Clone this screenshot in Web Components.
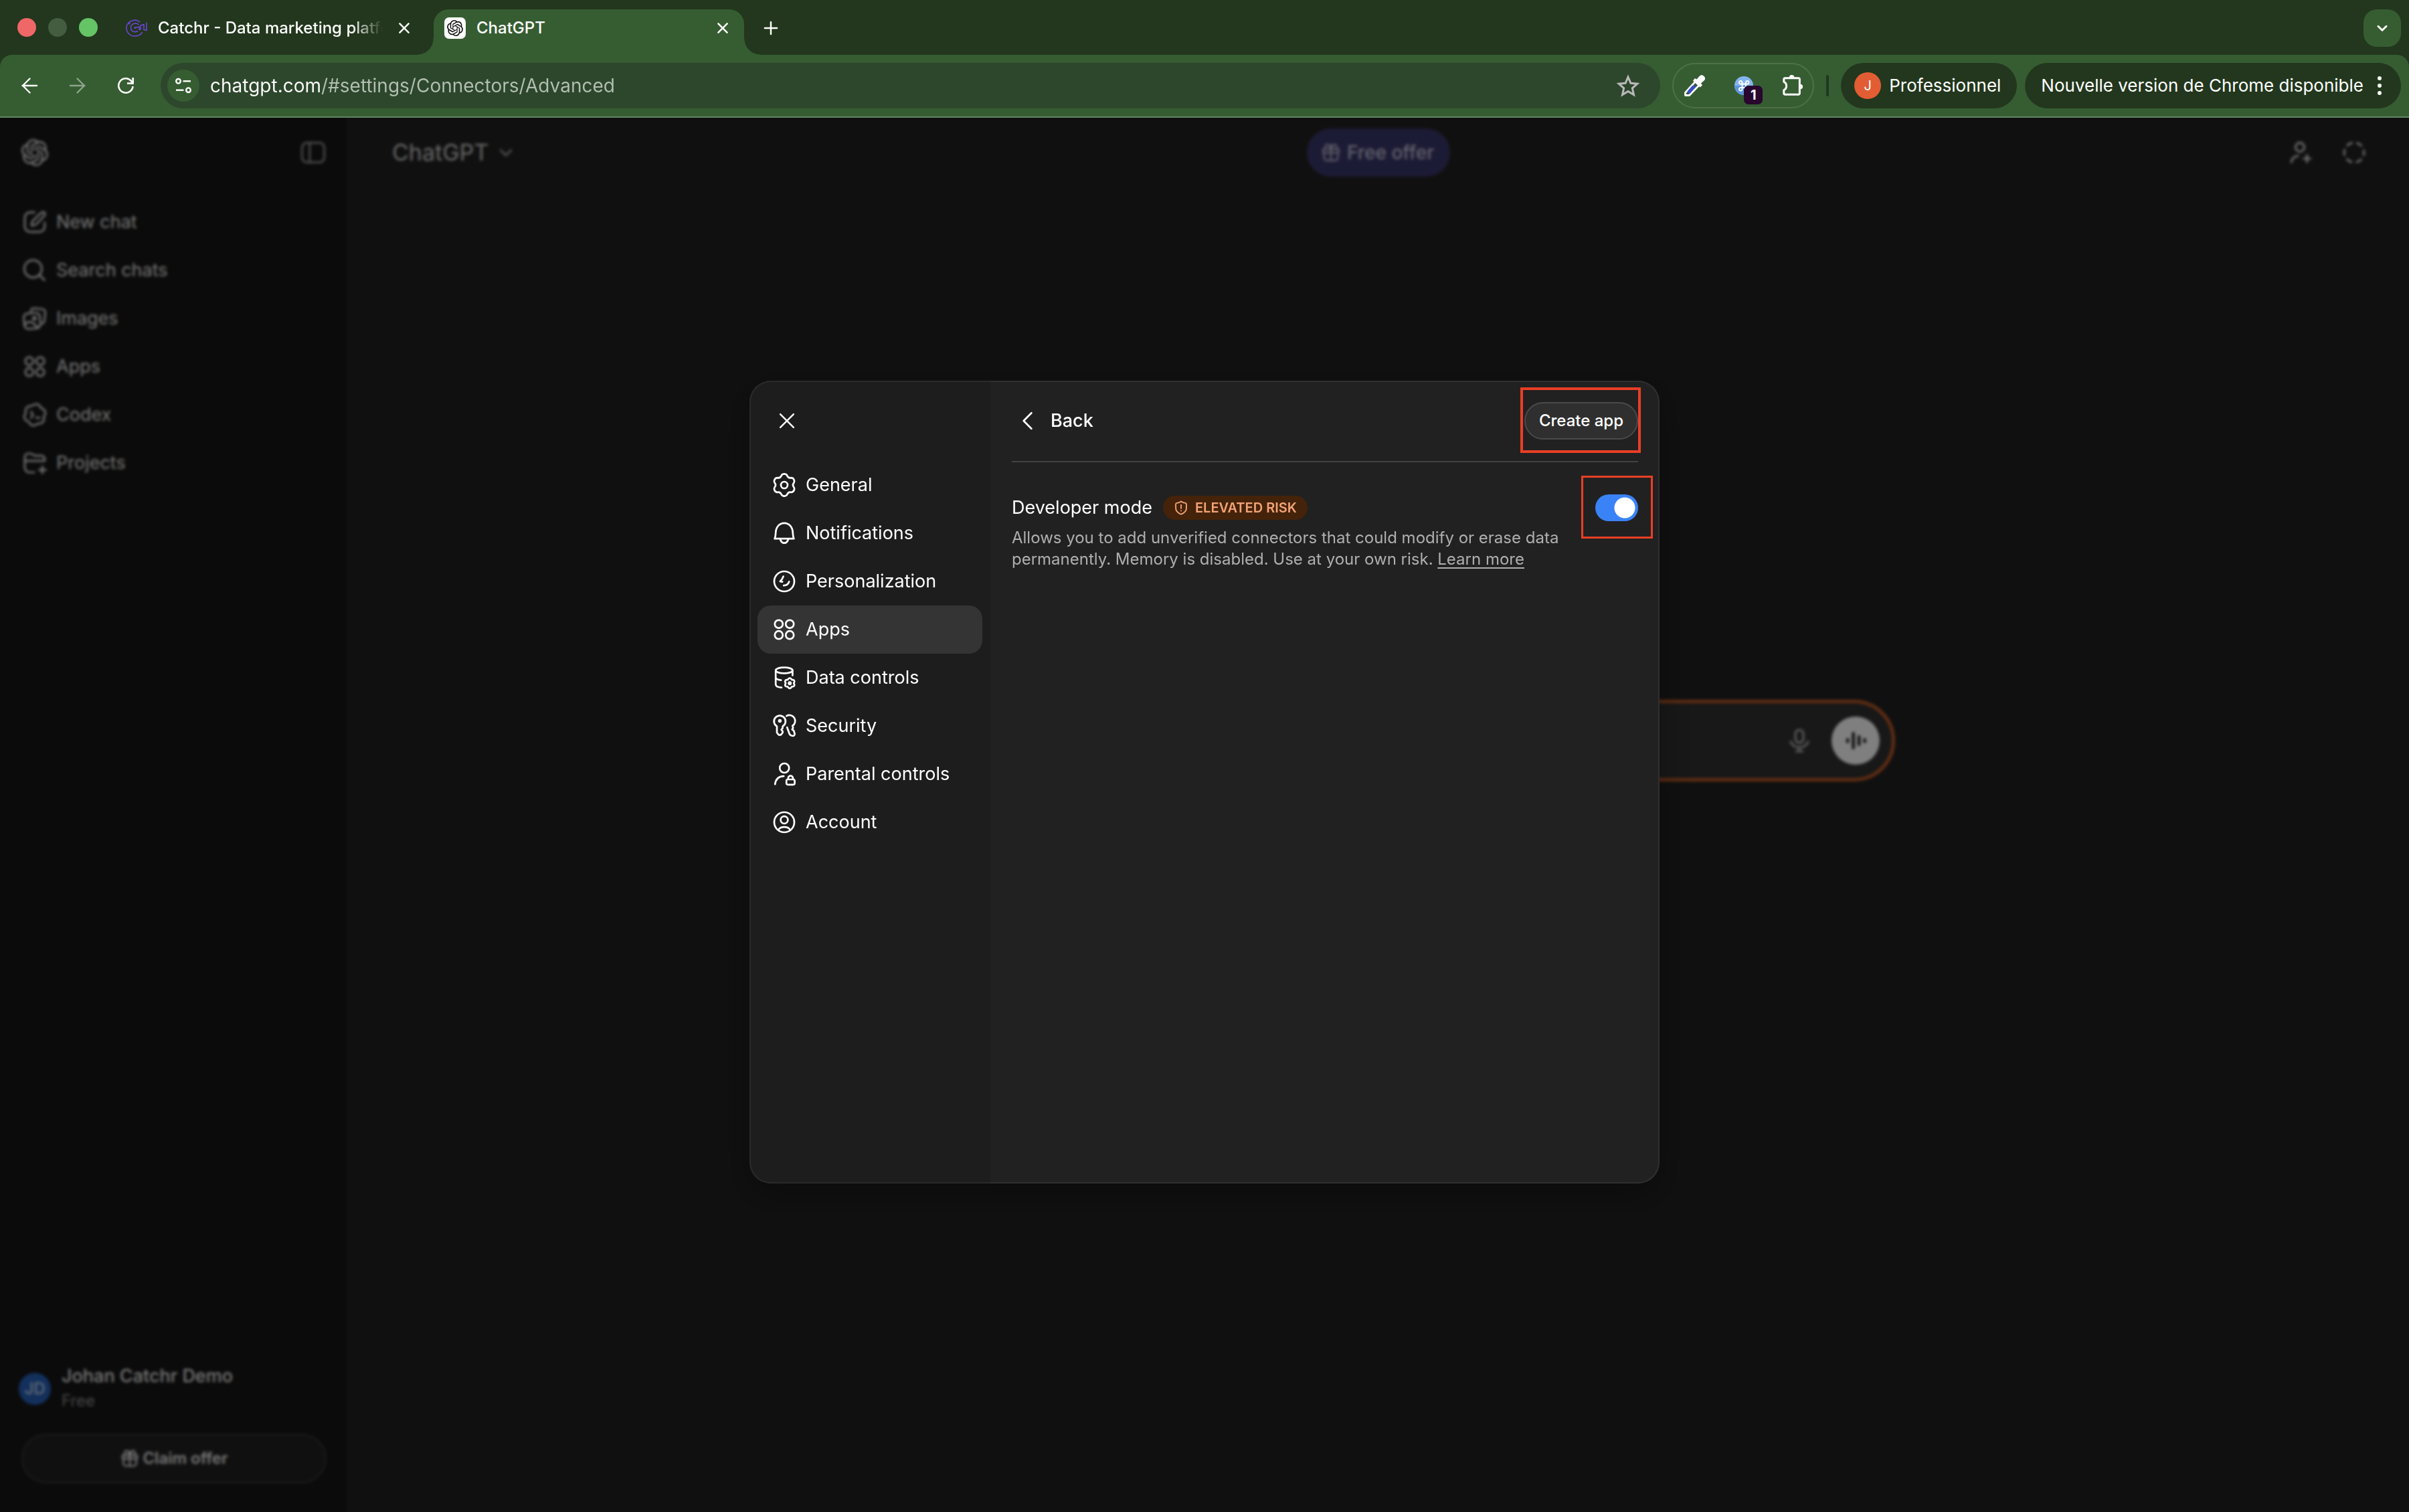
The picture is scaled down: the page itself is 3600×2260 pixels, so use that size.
<!DOCTYPE html>
<html lang="en">
<head>
<meta charset="utf-8">
<title>ChatGPT</title>
<style>
    html, body {
        height: 100%;
        margin: 0;
    }
    body {
        background: #101010;
        color: #fff;
        font-family: Inter, "Liberation Sans", sans-serif;
        font-size: 27px;
        line-height: 40px;
    }
</style>
</head>
<body>
<browser-window>
    <tab-strip slot="tabs">
        <browser-tab icon="catchr">Catchr - Data marketing platfo</browser-tab>
        <browser-tab icon="chatgpt" active>ChatGPT</browser-tab>
    </tab-strip>
    <tool-bar slot="toolbar" url="chatgpt.com/#settings/Connectors/Advanced"></tool-bar>
    <chat-app>
        <side-bar slot="sidebar">
            <side-item icon="edit">New chat</side-item>
            <side-item icon="search">Search chats</side-item>
            <side-item icon="images">Images</side-item>
            <side-item icon="apps">Apps</side-item>
            <side-item icon="codex">Codex</side-item>
            <side-item icon="folder">Projects</side-item>
        </side-bar>
        <chat-header></chat-header>
        <chat-composer></chat-composer>
        <settings-dialog slot="dialog">
            <settings-item slot="nav" icon="gear">General</settings-item>
            <settings-item slot="nav" icon="bell">Notifications</settings-item>
            <settings-item slot="nav" icon="mood">Personalization</settings-item>
            <settings-item slot="nav" icon="apps" selected>Apps</settings-item>
            <settings-item slot="nav" icon="data">Data controls</settings-item>
            <settings-item slot="nav" icon="keys">Security</settings-item>
            <settings-item slot="nav" icon="parent">Parental controls</settings-item>
            <settings-item slot="nav" icon="account">Account</settings-item>
            <setting-row
                label="Developer mode"
                badge="ELEVATED RISK"
                description="Allows you to add unverified connectors that could modify or erase data permanently. Memory is disabled. Use at your own risk."
            ></setting-row>
        </settings-dialog>
    </chat-app>
</browser-window>

<script>
// closed outline with six soft lobes, used by the gears and the Codex mark
function lobes(cx, cy, outer, inner, turn) {
    const at = (deg, r) => {
        const a = (deg + turn) * Math.PI / 180;
        return (cx + r * Math.cos(a)).toFixed(2) + " " + (cy + r * Math.sin(a)).toFixed(2);
    };
    const mid = (outer + inner) / 2;
    let d = "M" + at(-14, mid);
    for (let n = 0; n < 360; n += 60) {
        d += `Q${at(n, inner - (mid - inner))} ${at(n + 14, mid)}`;
        d += `C${at(n + 22, outer * 1.04)} ${at(n + 38, outer * 1.04)} ${at(n + 46, mid)}`;
    }
    return d + "Z";
}

const KNOT = "M22.2819 9.8211a5.9847 5.9847 0 0 0-.5157-4.9108 6.0462 6.0462 0 0 0-6.5098-2.9A6.0651 6.0651 0 0 0 4.9807 4.1818a5.9847 5.9847 0 0 0-3.9977 2.9 6.0462 6.0462 0 0 0 .7427 7.0966 5.98 5.98 0 0 0 .511 4.9107 6.051 6.051 0 0 0 6.5146 2.9001A5.9847 5.9847 0 0 0 13.2599 24a6.0557 6.0557 0 0 0 5.7718-4.2058 5.9894 5.9894 0 0 0 3.9977-2.9001 6.0557 6.0557 0 0 0-.7475-7.0729zm-9.022 12.6081a4.4755 4.4755 0 0 1-2.8764-1.0408l.1419-.0804 4.7783-2.7582a.7948.7948 0 0 0 .3927-.6813v-6.7369l2.02 1.1686a.071.071 0 0 1 .038.052v5.5826a4.504 4.504 0 0 1-4.4945 4.4944zm-9.6607-4.1254a4.4708 4.4708 0 0 1-.5346-3.0137l.142.0852 4.783 2.7582a.7712.7712 0 0 0 .7806 0l5.8428-3.3685v2.3324a.0804.0804 0 0 1-.0332.0615L9.74 19.9502a4.4992 4.4992 0 0 1-6.1408-1.6464zM2.3408 7.8956a4.485 4.485 0 0 1 2.3655-1.9728V11.6a.7664.7664 0 0 0 .3879.6765l5.8144 3.3543-2.0201 1.1685a.0757.0757 0 0 1-.071 0l-4.8303-2.7865A4.504 4.504 0 0 1 2.3408 7.872zm16.5963 3.8558L13.1038 8.364 15.1192 7.2a.0757.0757 0 0 1 .071 0l4.8303 2.7913a4.4944 4.4944 0 0 1-.6765 8.1042v-5.6772a.79.79 0 0 0-.407-.667zm2.0107-3.0231l-.142-.0852-4.7735-2.7818a.7759.7759 0 0 0-.7854 0L9.409 9.2297V6.8974a.0662.0662 0 0 1 .0284-.0615l4.8303-2.7866a4.4992 4.4992 0 0 1 6.6802 4.66zM8.3065 12.863l-2.02-1.1638a.0804.0804 0 0 1-.038-.0567V6.0742a4.4992 4.4992 0 0 1 7.3757-3.4537l-.142.0805L8.704 5.459a.7948.7948 0 0 0-.3927.6813zm1.0976-2.3654l2.602-1.4998 2.6069 1.4998v2.9994l-2.5974 1.4997-2.6067-1.4997Z";

// everything is drawn on a 20 x 20 grid unless a box is given
const ICONS = {
    knot: { box: "0 0 24 24", body: `<path fill="currentColor" stroke="none" d="${KNOT}"/>` },
    chatgpt: { box: "0 0 32 32", body: `<rect width="32" height="32" rx="7" fill="#fff" stroke="none"/><path transform="translate(4 4)" fill="#111" stroke="none" d="${KNOT}"/>` },
    catchr: { box: "0 0 32 32", body: `<g stroke="#6c44d6" stroke-width="1.6"><path d="M21 6.600C14 1.500 4.500 5 1.200 12.500C-.5 22 6 28 13.500 28C18.500 28 22 26 24.500 22.500"/><path d="M19 10.500C14.500 7 7.500 9.500 7.500 15.500C7.500 21 13.500 23 17.500 20.500"/><path d="M14 15.500L20 14V18C20 18.800 22 18.800 22 17.800V12L27 10.500V18.500L31 19.500V8"/></g><circle cx="14" cy="15.500" r="1.600" fill="#6c44d6" stroke="none"/><circle cx="5" cy="9" r="1.500" fill="#6c44d6" stroke="none"/>` },
    close: { body: `<path d="M4.500 4.500l11 11M15.500 4.500l-11 11"/>` },
    plus: { body: `<path d="M10 3v14M3 10h14"/>` },
    down: { body: `<path d="M4.500 7.500L10 13l5.500-5.500"/>` },
    chevleft: { body: `<path d="M13 3.500L6.500 10l6.500 6.500"/>` },
    back: { box: "0 0 24 24", body: `<path stroke-width="2.400" d="M23 12H1.500M12.500 1.500L2 12l10.500 10.500"/>` },
    forward: { box: "0 0 24 24", body: `<path stroke-width="2.400" d="M1 12h21.500M11.500 1.500L22 12 11.500 22.500"/>` },
    reload: { box: "0 0 24 24", body: `<g stroke-width="2.600" stroke-linecap="butt"><path d="M22.600 13A10.700 10.700 0 1 1 19.800 4.700L22 7.500"/><path stroke-linejoin="miter" d="M22.700 0v8.600H14"/></g>` },
    tune: { box: "0 0 24 24", body: `<g stroke-width="2.400" stroke-linecap="butt"><circle cx="4.500" cy="5.300" r="3.300"/><path d="M11.500 5.300H23"/><circle cx="19.500" cy="18.700" r="3.300"/><path d="M1 18.700h11.500"/></g>` },
    star: { box: "0 0 32 32", body: `<path stroke-width="2.600" stroke-linejoin="miter" d="M16 4.500l3.500 8.200 8.800.8-6.700 5.900 2 8.700L16 23.500l-7.600 4.600 2-8.700-6.700-5.900 8.800-.8z"/>` },
    dropper: { box: "0 0 32 32", body: `<path d="M1.500 26.500L16.500 10l5.500 5.500L7.500 30.500H1.500z" fill="#33573a" stroke="#fff" stroke-width="2.800"/><path d="M5.500 26.500v-2l6.500-7.500h5L7.800 27.500z" fill="#3a4fc4" stroke="#3a4fc4"/><path d="M13 8.500l3-3.500 2.500 1.500 4.500-5c2-2 4.500-1.500 6.500.5s2 4.500.5 6l-5 4.500 2 3-3.500 3z" fill="#fff" stroke="none"/>` },
    globe: { box: "0 0 28 28", body: `<circle cx="14" cy="14" r="14" fill="#84b4ee" stroke="none"/><path d="M0 14a14 14 0 0 0 24 9.800V14z" fill="#5c96dc" stroke="none"/><path stroke="#fff" stroke-width="1.800" d="M11.500 11.500h5.500v5.500h-5.500zM11.500 11.500H9.300a2.300 2.300 0 1 1 2.200-2.200zM17 11.500V9.300a2.300 2.300 0 1 1 2.300 2.200zM11.500 17v2.200A2.300 2.300 0 1 1 9.300 17z"/>` },
    puzzle: { box: "0 0 34 34", body: `<path stroke-width="3.200" d="M3 11V7a2 2 0 0 1 2-2h21a2 2 0 0 1 2 2v22a2 2 0 0 1-2 2H5a2 2 0 0 1-2-2v-5c2.500-1 4-3.500 4-6.500s-1.500-5.500-4-6.500z"/><path fill="currentColor" stroke="none" d="M11.500 4a4 4 0 0 1 8 0zM29 14.500a4 4 0 0 1 0 8z"/>` },
    dots: { box: "0 0 8 32", body: `<g fill="currentColor" stroke="none"><circle cx="4" cy="5" r="3"/><circle cx="4" cy="16" r="3"/><circle cx="4" cy="27" r="3"/></g>` },
    panel: { body: `<rect x="1.700" y="2.700" width="16.600" height="14.600" rx="3.600"/><path d="M7.400 3v14"/>` },
    edit: { body: `<path d="M9.800 2.700H6.500a4 4 0 0 0-4 4v6.600a4 4 0 0 0 4 4h6.900a4 4 0 0 0 4-4v-3"/><path d="M15 2.900a1.500 1.500 0 0 1 2.200 2.200l-5.700 6.100c-.8.800-2.600 1.400-3.900 1.300 0-1.300.4-3 1.300-3.900z"/>` },
    search: { body: `<circle cx="8.700" cy="8.900" r="6.500"/><path d="M13.500 13.600l3.800 3.800"/>` },
    images: { body: `<path d="M7 4.600c.2-1.600 1.300-2.300 2.800-2.200l5.500.6c1.800.2 2.700 1.300 2.500 3l-.6 5.500c-.1 1.300-.6 2-1.600 2.300"/><rect x="2" y="6" width="12" height="11.600" rx="3" transform="rotate(-5 8 12)"/><circle cx="9.700" cy="9.900" r="1"/><path d="M2.600 14.500c3-3.200 5.500-2.400 9.800 2.400"/>` },
    apps: { body: `<circle cx="5.900" cy="5.900" r="3"/><circle cx="14.100" cy="5.900" r="3"/><circle cx="5.900" cy="14.100" r="3"/><circle cx="14.100" cy="14.100" r="3"/>` },
    codex: { body: `<path d="${lobes(10, 10, 8.1, 7.1, 12)}"/><path d="M7.200 7.700L8.600 10l-1.400 2.300M11 12.200h2.600"/>` },
    folder: { body: `<path d="M9.700 17H6a3.500 3.500 0 0 1-3.500-3.500V5.600A2.600 2.600 0 0 1 5.100 3h1.700c1.500 0 1.900 1.600 3.500 1.600h4.700a2.400 2.400 0 0 1 2.400 2.400v1.400H2.600"/><path d="M15.700 12.600v5.200M13.100 15.200h5.200"/>` },
    gift: { body: `<path d="M2.700 6.800h14.600v3.400H2.700zM3.600 10.200v4.600a2.600 2.600 0 0 0 2.600 2.600h7.600a2.600 2.600 0 0 0 2.600-2.600v-4.600M10 2.900v14.500M10 6.500C8.500 2.500 7 2 5.900 2.500s-1.500 2.300-.6 4.100M10 6.500c1.500-4 3-4.500 4.100-4s1.500 2.300.6 4.100"/>` },
    invite: { body: `<circle cx="9.500" cy="6" r="3.300"/><path d="M3 17.300c.6-2.900 2.500-4.600 5.200-4.900M14.800 11.800v5.400M12.100 14.500h5.400"/>` },
    temp: { body: `<circle cx="10" cy="10" r="7.400" stroke-linecap="butt" stroke-dasharray="4.950 2.800" stroke-dashoffset="2.475"/>` },
    mic: { body: `<rect x="7.100" y="2" width="5.800" height="9.600" rx="2.900"/><path d="M3.500 10.800c1 2.600 3.300 4.200 6.500 4.200s5.500-1.600 6.500-4.200M10 15v3M7.500 18h5"/>` },
    wave: { body: `<path stroke-width="2.300" d="M3 9v2M8 3.500v13M13 6.500v7M18 9v2"/>` },
    gear: { body: `<path d="${lobes(10, 10, 8.4, 6.6, 0)}"/><circle cx="10" cy="10" r="2.500"/>` },
    bell: { body: `<path d="M2.800 14.100h14.400c-.5-1-.7-2.300-.8-4.500C16.200 5.500 13.700 2.400 10 2.400S3.800 5.500 3.600 9.600c-.1 2.200-.3 3.500-.8 4.500z"/><path d="M7 14.300c.4 1.900 1.500 3 3 3s2.600-1.100 3-3"/>` },
    mood: { body: `<circle cx="10" cy="10" r="7.500"/><path d="M9.300 6.300C8.700 8.300 7.900 9.100 6.900 10c.7.200 1.200.3 1.700.3M9.600 13.100c1.900-.1 3.400-.9 4-2.900"/>` },
    data: { body: `<ellipse cx="9.900" cy="4.500" rx="6.300" ry="2.200"/><path d="M3.600 4.500v10.600c0 1.200 1.800 2 4.400 2.200M3.600 9.600c0 1.100 1.400 1.900 4 2.200M16.200 4.500v3.700"/><path d="${lobes(14.1, 14.1, 3.9, 3.1, 0)}"/><circle cx="14.100" cy="14.100" r=".8"/>` },
    keys: { body: `<path d="M4.500 10.300a4.300 4.300 0 1 1 4.300 0v1.400l-1 1.100 1 1.200v1l-.9 1.200c-.7.900-1.800.9-2.500 0l-.9-1.200z"/><circle cx="6.700" cy="6.300" r=".7" fill="currentColor"/><path d="M11.700 2.600a4.200 4.200 0 0 1 4.400 7.300l.5 1.500-.7 1.300 1.200.9.700 2.200c.1.900-.5 1.700-1.400 1.700-1.300-.2-2.100-.6-2.500-1.500l-1.800-4.900"/>` },
    parent: { body: `<circle cx="10.100" cy="5.500" r="3.500"/><path d="M3.100 17.600c.5-3.700 2.900-5.900 6.500-6"/><rect x="11.600" y="14" width="6.200" height="3.900" rx="1.100"/><path d="M12.900 13.800v-.7a1.800 1.800 0 0 1 3.600 0v.7"/>` },
    account: { body: `<circle cx="10" cy="10" r="7.500"/><circle cx="10" cy="8.300" r="2.700"/><path d="M5.600 15.800c.8-1.600 2.400-2.200 4.400-2.200s3.600.6 4.400 2.200"/>` },
    shield: { body: `<path d="M10 1.300c1.700 1.300 3.600 2 5.700 2.200.9.100 1.500.8 1.500 1.700v5.400c0 4.200-3.300 6.500-7.200 8.100-3.900-1.600-7.200-3.900-7.200-8.100V5.200c0-.9.600-1.600 1.500-1.700 2.100-.2 4-.9 5.700-2.200z"/><path d="M10 6v4.800M10 13.900v.2"/>` },
};

class UiIcon extends HTMLElement {

    connectedCallback() {
        this.attachShadow({ mode: "open" });
        this.render();
    }

    render() {
        const icon = ICONS[this.getAttribute("name")];
        this.shadowRoot.innerHTML = `
            <style>
                :host { display: block; flex: none; width: 40px; height: 40px; }
                svg { display: block; width: 100%; height: 100%; overflow: visible; }
            </style>
            <svg viewBox="${icon.box || "0 0 20 20"}" fill="none" stroke="currentColor" stroke-width="${this.getAttribute("weight") || "1.35"}"
                stroke-linecap="round" stroke-linejoin="round" aria-hidden="true">${icon.body}</svg>
        `;
    }
}
customElements.define("ui-icon", UiIcon);


class BrowserWindow extends HTMLElement {

    connectedCallback() {
        this.attachShadow({ mode: "open" });
        this.shadowRoot.innerHTML = `
            <style>
                :host { display: flex; flex-direction: column; min-height: 100vh; background: #22371d; }
                main { display: flex; flex: 1; }
                main ::slotted(*) { flex: 1; }
            </style>
            <slot name="tabs"></slot>
            <slot name="toolbar"></slot>
            <main><slot></slot></main>
        `;
    }
}
customElements.define("browser-window", BrowserWindow);


class TabStrip extends HTMLElement {

    connectedCallback() {
        this.attachShadow({ mode: "open" });
        this.shadowRoot.innerHTML = `
            <style>
                :host { display: flex; align-items: flex-end; height: 82px; padding: 0 12px 0 26px; box-sizing: border-box; }
                .lights { display: flex; gap: 18px; height: 82px; align-items: center; margin-right: 26px; }
                .lights i { width: 28px; height: 28px; border-radius: 50%; background: #445c40; }
                .lights i:first-child { background: #ef6767; }
                .lights i:last-child { background: #65c466; }
                .tabs { display: flex; gap: 12px; }
                button { display: grid; place-items: center; width: 56px; height: 56px; margin: 0 0 12px; padding: 0; border: 0; border-radius: 20px; background: none; color: #fff; }
                .new { margin-left: 12px; }
                .list { margin-left: auto; background: #365d32; }
                ui-icon { width: 26px; height: 26px; }
                .list ui-icon { width: 22px; height: 22px; }
            </style>
            <div class="lights"><i></i><i></i><i></i></div>
            <div class="tabs" role="tablist"><slot></slot></div>
            <button class="new" aria-label="New tab"><ui-icon name="plus" weight="1.9"></ui-icon></button>
            <button class="list" aria-label="Search tabs"><ui-icon name="down" weight="2.6"></ui-icon></button>
        `;
    }
}
customElements.define("tab-strip", TabStrip);


class BrowserTab extends HTMLElement {

    connectedCallback() {
        this.attachShadow({ mode: "open" });
        this.shadowRoot.innerHTML = `
            <style>
                :host { position: relative; display: flex; align-items: center; width: 464px; height: 68px; padding: 0 16px 12px; box-sizing: border-box; font-size: 24px; font-weight: 500; line-height: 32px; }
                :host([active]) { background: #365d32; border-radius: 22px 22px 0 0; }
                :host([active])::before, :host([active])::after { content: ""; position: absolute; bottom: 0; width: 24px; height: 24px; }
                :host([active])::before { right: 100%; background: radial-gradient(circle at 0 0, transparent 23px, #365d32 24px); }
                :host([active])::after { left: 100%; background: radial-gradient(circle at 100% 0, transparent 23px, #365d32 24px); }
                .icon { width: 32px; height: 32px; margin-right: 16px; }
                span { flex: 1; overflow: hidden; white-space: nowrap; }
                :host(:not([active])) span { -webkit-mask-image: linear-gradient(90deg, #000 86%, transparent); mask-image: linear-gradient(90deg, #000 86%, transparent); }
                button { display: grid; place-items: center; width: 32px; height: 32px; margin-left: 16px; padding: 0; border: 0; background: none; color: #fff; }
                button ui-icon { width: 24px; height: 24px; }
            </style>
            <ui-icon class="icon" name="${this.getAttribute("icon")}"></ui-icon>
            <span role="tab"><slot></slot></span>
            <button aria-label="Close tab"><ui-icon name="close" weight="2.1"></ui-icon></button>
        `;
    }
}
customElements.define("browser-tab", BrowserTab);


class ToolBar extends HTMLElement {

    connectedCallback() {
        this.attachShadow({ mode: "open" });
        this.shadowRoot.innerHTML = `
            <style>
                :host { display: flex; align-items: center; gap: 18px; padding: 12px 12px 12px 16px; background: #365d32; border-bottom: 2px solid #628562; border-radius: 18px 18px 0 0; font-size: 26px; }
                button { display: flex; align-items: center; margin: 0; padding: 0; border: 0; background: none; color: #fff; font: inherit; white-space: nowrap; }
                nav { display: flex; gap: 16px; margin-right: 6px; }
                nav button { width: 56px; height: 56px; justify-content: center; }
                nav ui-icon { width: 24px; height: 24px; }
                nav button:disabled { color: #8ea48c; }
                .omnibox { display: flex; flex: 1; align-items: center; height: 68px; padding: 0 30px 0 10px; box-sizing: border-box; border-radius: 34px; background: #2d472c; }
                .site { width: 48px; height: 48px; justify-content: center; margin-right: 16px; border-radius: 50%; background: #365d32; }
                .site ui-icon { width: 24px; height: 24px; }
                /* host in white, the rest of the address in grey */
                input { flex: 1; min-width: 0; padding: 0; border: 0; outline: 0; font: 400 28px/40px Inter, "Liberation Sans", sans-serif; color: #fff; -webkit-text-fill-color: transparent; background: linear-gradient(90deg, #fff 166px, #b3bfb2 166px); -webkit-background-clip: text; background-clip: text; }
                .star { color: #b9b9b9; }
                .star ui-icon { width: 36px; height: 36px; }
                .extensions { display: flex; align-items: center; justify-content: space-between; width: 212px; height: 68px; padding: 0 14px 0 16px; box-sizing: border-box; border: 2px solid #4e7049; border-radius: 34px; }
                .extensions ui-icon { width: 32px; height: 32px; }
                .count { position: relative; }
                .count ui-icon { width: 28px; height: 28px; }
                .count b { position: absolute; left: 14px; top: 14px; width: 28px; height: 28px; border-radius: 7px; background: #28062e; font-size: 20px; font-weight: 700; line-height: 28px; text-align: center; }
                hr { width: 4px; height: 32px; margin: 0; border: 0; border-radius: 2px; background: #22371d; }
                .pills { display: flex; gap: 12px; }
                .pill { height: 68px; border-radius: 34px; background: #22371d; }
                .profile { gap: 12px; padding: 0 24px 0 20px; }
                .profile i { width: 40px; height: 40px; border-radius: 50%; background: #e25d33; font-size: 20px; font-style: normal; text-align: center; }
                .update { gap: 20px; padding: 0 28px 0 24px; }
                .update ui-icon { width: 8px; height: 32px; }
            </style>
            <nav>
                <button aria-label="Back"><ui-icon name="back"></ui-icon></button>
                <button aria-label="Forward" disabled><ui-icon name="forward"></ui-icon></button>
                <button aria-label="Reload"><ui-icon name="reload"></ui-icon></button>
            </nav>
            <div class="omnibox">
                <button class="site" aria-label="Site information"><ui-icon name="tune"></ui-icon></button>
                <input type="text" aria-label="Address" value="${this.getAttribute("url")}">
                <button class="star" aria-label="Bookmark"><ui-icon name="star"></ui-icon></button>
            </div>
            <div class="extensions">
                <button aria-label="Color picker"><ui-icon name="dropper"></ui-icon></button>
                <button class="count" aria-label="Shortcuts"><ui-icon name="globe"></ui-icon><b>1</b></button>
                <button aria-label="Extensions"><ui-icon name="puzzle"></ui-icon></button>
            </div>
            <hr>
            <div class="pills">
                <button class="pill profile"><i>J</i>Professionnel</button>
                <button class="pill update">Nouvelle version de Chrome disponible<ui-icon name="dots"></ui-icon></button>
            </div>
        `;
    }
}
customElements.define("tool-bar", ToolBar);


class ChatApp extends HTMLElement {

    connectedCallback() {
        this.attachShadow({ mode: "open" });
        this.shadowRoot.innerHTML = `
            <style>
                :host { position: relative; display: flex; background: #212121; color: #ececec; }
                .page { display: flex; flex: 1; flex-direction: column; min-width: 0; }
                .scrim { position: absolute; inset: 0; display: flex; align-items: flex-start; justify-content: center; padding-top: 393px; background: rgba(0, 0, 0, .5); -webkit-backdrop-filter: blur(2px); backdrop-filter: blur(2px); }
            </style>
            <slot name="sidebar"></slot>
            <div class="page"><slot></slot></div>
            <div class="scrim"><slot name="dialog"></slot></div>
        `;
    }
}
customElements.define("chat-app", ChatApp);


class SideBar extends HTMLElement {

    connectedCallback() {
        this.attachShadow({ mode: "open" });
        this.shadowRoot.innerHTML = `
            <style>
                :host { display: flex; flex-direction: column; width: 518px; box-sizing: border-box; background: #161616; }
                button { display: flex; align-items: center; margin: 0; padding: 0; border: 0; background: none; color: inherit; font: inherit; text-align: left; }
                header { display: flex; align-items: center; justify-content: space-between; height: 104px; padding: 0 30px 0 32px; }
                header .panel { color: #a0a0a0; }
                nav { display: flex; flex: 1; flex-direction: column; padding-top: 16px; }
                .user { gap: 16px; padding: 0 28px; line-height: 32px; }
                .user i { display: grid; place-items: center; width: 48px; height: 48px; border-radius: 50%; background: #2660b8; color: #c8d6ec; font-size: 24px; font-style: normal; font-weight: 500; }
                .user span { display: block; font-weight: 500; }
                .user small { display: block; margin-top: 5px; color: #8f8f8f; font-size: 24px; }
                .claim { justify-content: center; gap: 4px; height: 74px; margin: 33px 30px 43px 32px; border: 2px solid #383838; border-radius: 37px; background: #212121; font-size: 24px; font-weight: 600; }
                .claim ui-icon { width: 30px; height: 30px; }
            </style>
            <header>
                <button aria-label="Home"><ui-icon name="knot"></ui-icon></button>
                <button class="panel" aria-label="Close sidebar"><ui-icon name="panel"></ui-icon></button>
            </header>
            <nav><slot></slot></nav>
            <button class="user"><i>JD</i><div><span>Johan Catchr Demo</span><small>Free</small></div></button>
            <button class="claim"><ui-icon name="gift" weight="1.6"></ui-icon>Claim offer</button>
        `;
    }
}
customElements.define("side-bar", SideBar);


class SideItem extends HTMLElement {

    connectedCallback() {
        this.attachShadow({ mode: "open" });
        this.shadowRoot.innerHTML = `
            <style>
                :host { display: block; }
                a { display: flex; align-items: center; gap: 12px; height: 72px; padding: 0 32px; color: inherit; text-decoration: none; }
            </style>
            <a href="#"><ui-icon name="${this.getAttribute("icon")}"></ui-icon><slot></slot></a>
        `;
    }
}
customElements.define("side-item", SideItem);


class ChatHeader extends HTMLElement {

    connectedCallback() {
        this.attachShadow({ mode: "open" });
        this.shadowRoot.innerHTML = `
            <style>
                :host { display: grid; grid-template-columns: 1fr auto 1fr; align-items: center; height: 104px; padding: 0 66px 0 68px; }
                button { display: flex; align-items: center; margin: 0; padding: 0; border: 0; background: none; color: inherit; font: inherit; }
                .model { gap: 12px; color: #cfcfcf; font-size: 34px; }
                .model ui-icon { width: 28px; height: 28px; color: #9a9a9a; }
                .offer { gap: 8px; height: 72px; padding: 0 24px 0 20px; border-radius: 36px; background: #39366a; color: #c4c3d8; font-size: 28px; font-weight: 500; }
                .offer ui-icon { width: 32px; height: 32px; }
                .tools { display: flex; gap: 40px; justify-content: flex-end; margin-right: -4px; }
            </style>
            <button class="model">ChatGPT<ui-icon name="down" weight="2.2"></ui-icon></button>
            <button class="offer"><ui-icon name="gift"></ui-icon>Free offer</button>
            <div class="tools">
                <button aria-label="Invite"><ui-icon name="invite"></ui-icon></button>
                <button aria-label="Temporary chat"><ui-icon name="temp"></ui-icon></button>
            </div>
        `;
    }
}
customElements.define("chat-header", ChatHeader);


class ChatComposer extends HTMLElement {

    connectedCallback() {
        this.attachShadow({ mode: "open" });
        this.shadowRoot.innerHTML = `
            <style>
                :host { display: block; padding: 766px 64px 0; }
                form { display: flex; align-items: center; max-width: 1546px; height: 122px; margin: 0 auto; padding: 0 18px; box-sizing: border-box; border: 5px solid #c25a26; border-radius: 61px; background: #303030; }
                input { flex: 1; min-width: 0; border: 0; outline: 0; background: none; color: inherit; font: inherit; }
                button { display: grid; place-items: center; width: 72px; height: 72px; margin: 0; padding: 0; border: 0; border-radius: 50%; background: none; color: #b4b4b4; }
                .voice { margin-left: 12px; background: #fff; color: #000; }
                .voice ui-icon { width: 34px; height: 34px; }
            </style>
            <form>
                <input type="text" aria-label="Message">
                <button type="button" aria-label="Dictate"><ui-icon name="mic" weight="1.6"></ui-icon></button>
                <button type="button" class="voice" aria-label="Voice mode"><ui-icon name="wave"></ui-icon></button>
            </form>
        `;
    }
}
customElements.define("chat-composer", ChatComposer);


class SettingsDialog extends HTMLElement {

    connectedCallback() {
        this.attachShadow({ mode: "open" });
        this.shadowRoot.innerHTML = `
            <style>
                :host { display: grid; grid-template-columns: 360px 1fr; width: 1360px; max-width: 90%; min-height: 1200px; box-sizing: border-box; overflow: hidden; border-radius: 32px; background: #212121; color: #fff; box-shadow: inset 0 0 0 2px #2f2f2f, 0 16px 48px rgba(0, 0, 0, .3); }
                button { display: flex; align-items: center; margin: 0; padding: 0; border: 0; background: none; color: inherit; font: inherit; white-space: nowrap; }
                nav { padding: 24px 12px; background: rgba(0, 0, 0, .1); }
                .close { justify-content: center; width: 72px; height: 72px; margin: 0 0 24px 8px; }
                .close ui-icon { width: 36px; height: 36px; }
                section { padding: 0 32px; }
                header { display: flex; align-items: center; justify-content: space-between; height: 122px; box-sizing: border-box; border-bottom: 2px solid #424242; }
                .back { gap: 16px; padding-left: 6px; font-weight: 500; }
                .back ui-icon { width: 36px; height: 36px; }
                .create { height: 56px; padding: 0 20px; border: 2px solid #4a4a4a; border-radius: 28px; background: #2f2f2f; font-size: 24px; font-weight: 500; }
                .mark { position: relative; }
                .mark::after { content: ""; position: absolute; inset: -22px -4px -20px -6px; border: 4px solid #e93f25; pointer-events: none; }
            </style>
            <nav>
                <button class="close" aria-label="Close"><ui-icon name="close"></ui-icon></button>
                <slot name="nav"></slot>
            </nav>
            <section>
                <header>
                    <button class="back"><ui-icon name="chevleft" weight="1.5"></ui-icon>Back</button>
                    <div class="mark"><button class="create">Create app</button></div>
                </header>
                <slot></slot>
            </section>
        `;
    }
}
customElements.define("settings-dialog", SettingsDialog);


class SettingsItem extends HTMLElement {

    connectedCallback() {
        this.attachShadow({ mode: "open" });
        this.shadowRoot.innerHTML = `
            <style>
                :host { display: block; }
                button { display: flex; align-items: center; gap: 12px; width: 100%; height: 72px; margin: 0; padding: 0 20px; border: 0; border-radius: 20px; background: none; color: inherit; font: inherit; text-align: left; }
                :host([selected]) button { background: #343434; }
            </style>
            <button><ui-icon name="${this.getAttribute("icon")}"></ui-icon><slot></slot></button>
        `;
    }
}
customElements.define("settings-item", SettingsItem);


class SettingRow extends HTMLElement {

    connectedCallback() {
        this.attachShadow({ mode: "open" });
        this.render();
    }

    render() {
        this.shadowRoot.innerHTML = `
            <style>
                :host { display: flex; justify-content: space-between; gap: 48px; padding-top: 48px; }
                .title { display: flex; align-items: center; gap: 16px; }
                .badge { display: flex; align-items: center; gap: 10px; height: 36px; padding: 0 16px; border-radius: 18px; background: #44230a; color: #f3a376; font-size: 20px; font-weight: 600; }
                .badge ui-icon { width: 22px; height: 22px; }
                p { max-width: 832px; margin: 9px 0 0; color: #afafaf; font-size: 24px; line-height: 32px; }
                a { color: inherit; text-underline-offset: 4px; text-decoration-thickness: 2px; }
                .mark { position: relative; height: 40px; }
                .mark::after { content: ""; position: absolute; inset: -28px -22px -26px -21px; border: 3px solid #e93f25; pointer-events: none; }
                input { display: block; width: 64px; height: 40px; margin: 0; border-radius: 20px; background: radial-gradient(circle at 44px 20px, #fff 15px, transparent 16px), #3a83f7; -webkit-appearance: none; appearance: none; }
                input:not(:checked) { background: radial-gradient(circle at 20px 20px, #fff 15px, transparent 16px), #5d5d5d; }
            </style>
            <div>
                <div class="title">
                    <label for="toggle">${this.getAttribute("label")}</label>
                    <span class="badge"><ui-icon name="shield" weight="1.7"></ui-icon>${this.getAttribute("badge")}</span>
                </div>
                <p>${this.getAttribute("description")} <a href="#">Learn more</a></p>
            </div>
            <div class="mark"><input type="checkbox" role="switch" id="toggle" checked></div>
        `;
    }
}
customElements.define("setting-row", SettingRow);
</script>
</body>
</html>
